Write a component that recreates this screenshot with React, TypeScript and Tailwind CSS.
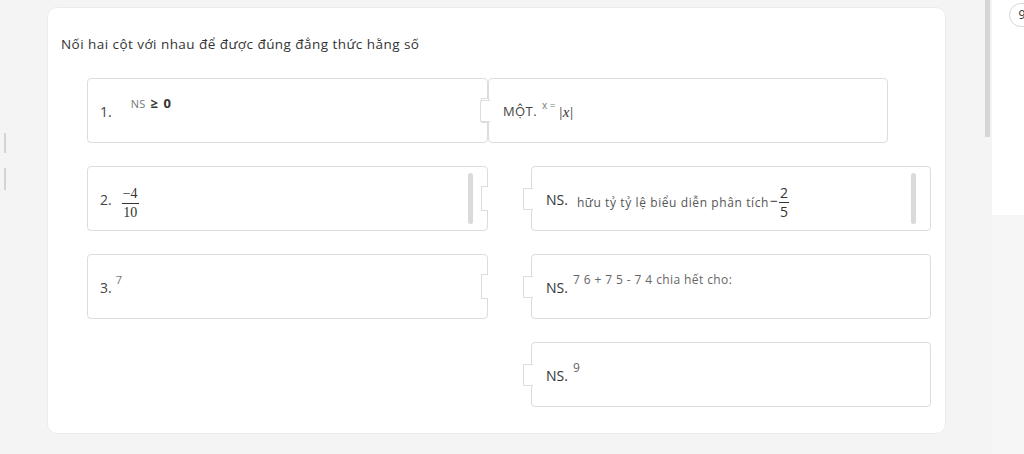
import React from 'react';

// puzzle-style matching boxes
const font = "font-['Open_Sans','Noto_Sans',sans-serif]";

const Notch = () => (
    <div className="absolute right-[-1px] top-[19px] h-[25px] w-[7px] border border-r-0 border-[#dcdcdc] bg-white" />
);

const Tab = () => (
    <div className="absolute left-[-9px] top-[21px] z-10 h-[22px] w-[10px] rounded-l-[2px] border border-r-0 border-[#dcdcdc] bg-white" />
);

const Thumb = () => (
    <div className="absolute right-[14px] top-[6px] bottom-[6px] w-[5px] rounded-full bg-[#dadada]" />
);

const LeftBox: React.FC<{ children: React.ReactNode; thumb?: boolean }> = ({ children, thumb }) => (
    <div className="relative flex h-[65px] w-[401px] shrink-0 items-center rounded-[4px] border border-[#dcdcdc] bg-white pl-[12px] pt-[2px]">
        {children}
        {thumb && <Thumb />}
        <Notch />
    </div>
);

const RightBox: React.FC<{ children: React.ReactNode; thumb?: boolean; joined?: boolean }> = ({ children, thumb, joined }) => (
    <div className={`relative flex h-[65px] w-[400px] shrink-0 items-center rounded-[4px] border border-[#dcdcdc] bg-white pl-[14px] pt-[2px] ${joined ? '' : 'ml-[43px]'}`}>
        <Tab />
        {children}
        {thumb && <Thumb />}
    </div>
);

const Frac: React.FC<{ top: string; bottom: string; serif?: boolean }> = ({ top, bottom, serif }) => (
    <span className={`inline-flex flex-col items-center leading-none ${serif ? "font-['Liberation_Serif',serif]" : ''}`}>
        <span className="px-[1px] text-[14px]">{top}</span>
        <span className="my-[2px] h-[1px] w-full bg-[#333]" />
        <span className="px-[1px] text-[14px]">{bottom}</span>
    </span>
);

export default function App() {
    return (
        <div className={`flex h-[454px] w-[1024px] overflow-hidden bg-[#f4f4f4] ${font} text-[#444]`}>
            {/* left gutter */}
            <div className="flex w-[47px] shrink-0 flex-col gap-[15px] pl-[4px] pt-[133px]">
                <div className="h-[20px] w-[2px] bg-[#d4d4d4]" />
                <div className="h-[22px] w-[2px] bg-[#d4d4d4]" />
            </div>

            {/* card */}
            <div className="mt-[7px] h-[427px] w-[899px] shrink-0 rounded-[10px] border border-[#ececec] bg-white">
                <h2 className="ml-[13px] mt-[26px] text-[13.5px] font-medium tracking-[0.45px] text-[#333]">
                    Nối hai cột với nhau để được đúng đẳng thức hằng số
                </h2>

                <div className="ml-[39px] mt-[24px] flex flex-col gap-[23px]">
                    <div className="flex">
                        <LeftBox>
                            <span className="text-[14px]">1.</span>
                            <span className="relative top-[-8px] ml-[19px] text-[11px] tracking-[0.3px] text-[#777]">NS</span>
                            <span className="relative top-[-8px] ml-[5px] text-[13px] font-bold tracking-[1px] text-[#333]">≥ 0</span>
                        </LeftBox>
                        <RightBox joined>
                            <span className="text-[13px] tracking-[0.4px]">MỘT.</span>
                            <span className="relative top-[-6px] ml-[5px] text-[10px] text-[#777]">x =</span>
                            <span className="ml-[3px] font-['Liberation_Serif',serif] text-[15px] italic text-[#333]">|x|</span>
                        </RightBox>
                    </div>

                    <div className="flex">
                        <LeftBox thumb>
                            <span className="text-[14px]">2.</span>
                            <span className="ml-[10px] text-[#333]">
                                <Frac top="−4" bottom="10" serif />
                            </span>
                        </LeftBox>
                        <RightBox thumb>
                            <span className="text-[14px] text-[#333]">NS.</span>
                            <span className="relative top-[3px] ml-[9px] text-[12px] tracking-[0.6px] text-[#555]">hữu tỷ tỷ lệ biểu diễn phân tích</span>
                            <span className="relative top-[1px] ml-[1px] text-[14px] text-[#333]">−</span>
                            <span className="ml-[1px] text-[#333]">
                                <Frac top="2" bottom="5" />
                            </span>
                        </RightBox>
                    </div>

                    <div className="flex">
                        <LeftBox>
                            <span className="text-[14px]">3.</span>
                            <span className="relative top-[-8px] ml-[4px] text-[11px] text-[#777]">7</span>
                        </LeftBox>
                        <RightBox>
                            <span className="text-[14px] text-[#333]">NS.</span>
                            <span className="relative top-[-8px] ml-[5px] text-[12px] tracking-[0.4px] text-[#666]">7 6 + 7 5 - 7 4 chia hết cho:</span>
                        </RightBox>
                    </div>

                    <div className="flex">
                        <div className="w-[401px] shrink-0" />
                        <RightBox>
                            <span className="text-[14px] text-[#333]">NS.</span>
                            <span className="relative top-[-8px] ml-[5px] text-[12px] text-[#666]">9</span>
                        </RightBox>
                    </div>
                </div>
            </div>

            <div className="w-[39px] shrink-0" />

            {/* page scrollbar */}
            <div className="w-[5px] shrink-0">
                <div className="h-[137px] w-[5px] bg-[#d6d6d6]" />
            </div>

            {/* right panel */}
            <div className="ml-[2px] flex flex-1 flex-col overflow-hidden">
                <div className="h-[215px] bg-white pl-[17px] pt-[3px]">
                    <div className="flex h-[24px] w-[26px] items-center justify-center rounded-full border border-[#d8d8d8] text-[12px] text-[#333]">
                        9
                    </div>
                </div>
                <div className="flex-1 bg-[#f6f6f6]" />
            </div>
        </div>
    );
}
